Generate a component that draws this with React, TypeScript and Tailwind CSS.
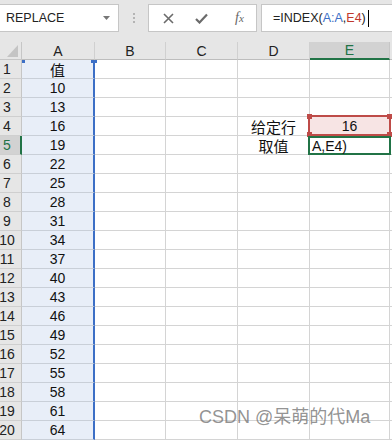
import React from "react";

const values = ["值", "10", "13", "16", "19", "22", "25", "28", "31", "34", "37", "40", "43", "46", "49", "52", "55", "58", "61", "64"];

const FONT = { fontFamily: '"Liberation Sans", "Noto Sans CJK SC", sans-serif' };
const CJK = { fontFamily: '"Noto Sans CJK SC", "Liberation Sans", sans-serif' };

function Row({ n, v }: { n: number; v: string }) {
  const active = n === 5;
  return (
    <div className="flex h-[19px]">
      <div
        className={
          "w-[22px] shrink-0 flex items-center border-b border-[#cfcfcf] " +
          (active
            ? "bg-[#d2d2d2] border-r-2 border-r-[#217346] text-[#217346]"
            : "bg-[#e6e6e6] border-r border-r-[#c6c6c6] text-[#222]")
        }
      >
        <div className="w-[14px] flex justify-center whitespace-nowrap text-[14px] leading-none">{n}</div>
      </div>
      <div className="w-[73px] shrink-0 relative bg-[#e8eef8] border-b border-[#c9cfd8] border-r-2 border-r-[#3c6fc6] flex items-center justify-center text-[14px] leading-none text-[#111]">
        {n === 1 ? <span style={CJK} className="text-[15px]">{v}</span> : v}
        {n === 1 && (
          <>
            <div className="absolute left-0 top-0 w-[3px] h-[3px] bg-[#3c6fc6]" />
            <div className="absolute right-[-4px] top-0 w-[6px] h-[3px] bg-[#3c6fc6]" />
          </>
        )}
      </div>
      <div className="w-[71px] shrink-0 border-b border-r border-[#d4d4d4]" />
      <div className="w-[72px] shrink-0 border-b border-r border-[#d4d4d4]" />
      <div className="w-[72px] shrink-0 border-b border-r border-[#d4d4d4] flex items-center justify-center text-[15px] leading-none text-[#111]" style={CJK}>
        {n === 4 ? "给定行" : n === 5 ? "取值" : ""}
      </div>
      <div
        className={
          "w-[80px] shrink-0 border-b border-r border-[#d4d4d4] relative text-[14px] leading-none text-[#111] " +
          (n === 4 ? "bg-[#f7e4e4]" : "")
        }
      >
        {n === 4 && (
          <div className="absolute left-[-2px] top-[-2px] right-[-2px] bottom-[-1px] border-2 border-[#be4b48] flex items-center justify-center">
            16
            <div className="absolute left-[-3px] top-[-3px] w-[5px] h-[5px] bg-[#be4b48]" />
            <div className="absolute right-[-3px] top-[-3px] w-[5px] h-[5px] bg-[#be4b48]" />
            <div className="absolute left-[-3px] bottom-[-3px] w-[5px] h-[5px] bg-[#be4b48]" />
            <div className="absolute right-[-3px] bottom-[-3px] w-[5px] h-[5px] bg-[#be4b48]" />
          </div>
        )}
        {n === 5 && (
          <div className="absolute left-[-2px] top-[0px] right-[-2px] bottom-[-1px] border-2 border-[#217346] flex items-center pl-[2px]">
            A,E4)
          </div>
        )}
      </div>
      <div className="flex-1 border-b border-[#d4d4d4]" />
    </div>
  );
}

export default function App() {
  return (
    <div className="w-[392px] h-[440px] overflow-hidden relative bg-white" style={FONT}>
      {/* toolbar */}
      <div className="h-[42px] bg-[#e6e6e6] flex items-start pt-[4px]">
        <div className="w-[120px] h-[28px] ml-[-1px] bg-white border border-[#c6c6c6] flex items-center pl-[6px] pr-[8px] shrink-0">
          <span className="text-[12.5px] text-[#222] flex-1">REPLACE</span>
          <svg width="7" height="4" viewBox="0 0 7 4"><path d="M0 0h7L3.5 4z" fill="#777" /></svg>
        </div>
        <div className="w-[29px] h-[28px] flex flex-col items-center justify-center gap-[2px] shrink-0">
          <div className="w-[2px] h-[2px] bg-[#b4b4b4]" />
          <div className="w-[2px] h-[2px] bg-[#b4b4b4]" />
          <div className="w-[2px] h-[2px] bg-[#b4b4b4]" />
        </div>
        <div className="w-[109px] h-[28px] bg-white border border-[#c6c6c6] flex items-center shrink-0">
          <div className="w-[38px] flex justify-center">
            <svg width="11" height="11" viewBox="0 0 11 11"><path d="M1 1L10 10M10 1L1 10" stroke="#6b6b6b" strokeWidth="1.6" /></svg>
          </div>
          <div className="w-[28px] flex justify-center">
            <svg width="13" height="11" viewBox="0 0 13 11"><path d="M1 6L4.5 9.5L12 1.5" stroke="#6b6b6b" strokeWidth="2.2" fill="none" /></svg>
          </div>
          <div className="flex-1 flex justify-center pl-[8px]">
            <span className="italic text-[14px] text-[#666] leading-none" style={{ fontFamily: '"Liberation Serif", serif' }}>
              f<span className="text-[11px]">x</span>
            </span>
          </div>
        </div>
        <div className="h-[28px] flex-1 ml-[4px] mr-[-2px] bg-white border border-[#c6c6c6] flex items-center pl-[11px] text-[12.5px] text-[#222]">
          <span>=INDEX(</span>
          <span className="text-[#3c6fc6]">A:A</span>
          <span>,</span>
          <span className="text-[#c0392b]">E4</span>
          <span>)</span>
          <span className="w-px h-[17px] bg-black ml-[2px]" />
        </div>
      </div>
      {/* column header */}
      <div className="flex h-[18px] bg-[#e6e6e6] text-[14px] leading-none text-[#222]">
        <div className="w-[22px] shrink-0 relative border-r border-b border-[#c6c6c6]">
          <svg className="absolute left-[7px] top-[3px]" width="11" height="12" viewBox="0 0 11 12"><path d="M11 0V12H0z" fill="#c4c4c4" /></svg>
        </div>
        <div className="w-[73px] shrink-0 border-r border-[#d0d0d0] border-b border-b-[#bdbdbd] flex items-center justify-center">A</div>
        <div className="w-[71px] shrink-0 border-r border-[#d0d0d0] border-b border-b-[#bdbdbd] flex items-center justify-center">B</div>
        <div className="w-[72px] shrink-0 border-r border-[#d0d0d0] border-b border-b-[#bdbdbd] flex items-center justify-center">C</div>
        <div className="w-[72px] shrink-0 border-r border-[#d0d0d0] border-b border-b-[#bdbdbd] flex items-center justify-center">D</div>
        <div className="w-[80px] shrink-0 bg-[#d2d2d2] border-r border-[#c6c6c6] border-b-2 border-b-[#217346] flex items-center justify-center text-[#217346]">E</div>
        <div className="flex-1 border-b border-[#bdbdbd]" />
      </div>
      {values.map((v, i) => (
        <Row key={i} n={i + 1} v={v} />
      ))}
      <div
        className="absolute left-[199px] top-[408px] text-[18px] leading-none whitespace-nowrap text-[#777]/80"
        style={{ fontFamily: '"Liberation Sans", "Noto Sans CJK SC", sans-serif' }}
      >
        CSDN @呆萌的代Ma
      </div>
    </div>
  );
}
